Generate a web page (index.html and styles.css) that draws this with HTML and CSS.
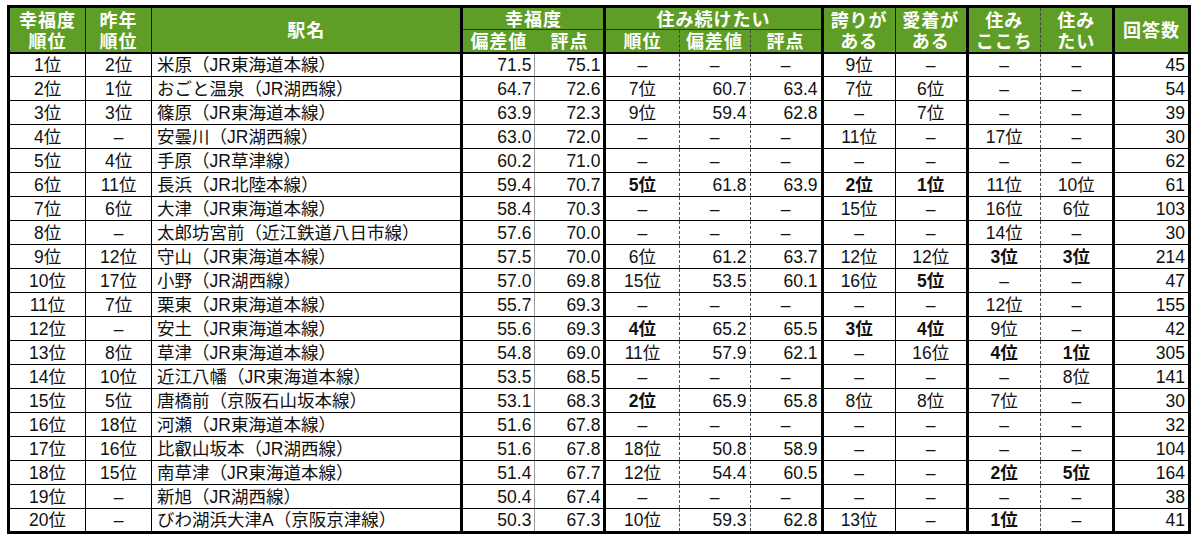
FILE: index.html
```html
<!DOCTYPE html>
<html lang="ja">
<head>
<meta charset="utf-8">
<title>幸福度ランキング</title>
<link rel="stylesheet" href="styles.css">
</head>
<body>
<div class="wrap">
<table class="rank">
<colgroup>
<col class="w1"><col class="w2"><col class="w3"><col class="w4"><col class="w5"><col class="w6"><col class="w7"><col class="w8"><col class="w9"><col class="w10"><col class="w11"><col class="w12"><col class="w13">
</colgroup>
<thead>
<tr class="h1">
<th rowspan="2" class="b-thin">幸福度<br>順位</th>
<th rowspan="2" class="b-thin">昨年<br>順位</th>
<th rowspan="2" class="b-thick">駅名</th>
<th colspan="2" class="b-thick hb">幸福度</th>
<th colspan="3" class="b-thick hb">住み続けたい</th>
<th rowspan="2" class="b-thin">誇りが<br>ある</th>
<th rowspan="2" class="b-thick">愛着が<br>ある</th>
<th rowspan="2" class="b-dash">住み<br>ここち</th>
<th rowspan="2" class="b-thick">住み<br>たい</th>
<th rowspan="2" class="b-thick">回答数</th>
</tr>
<tr class="h2">
<th class="b-none">偏差値</th>
<th class="b-thick">評点</th>
<th class="b-dash">順位</th>
<th class="b-dash">偏差値</th>
<th class="b-thick">評点</th>
</tr>
</thead>
<tbody>
<tr><td>1位</td><td>2位</td><td>米原（JR東海道本線）</td><td>71.5</td><td>75.1</td><td>–</td><td class="na">–</td><td class="na">–</td><td>9位</td><td>–</td><td>–</td><td>–</td><td>45</td></tr>
<tr><td>2位</td><td>1位</td><td>おごと温泉（JR湖西線）</td><td>64.7</td><td>72.6</td><td>7位</td><td>60.7</td><td>63.4</td><td>7位</td><td>6位</td><td>–</td><td>–</td><td>54</td></tr>
<tr><td>3位</td><td>3位</td><td>篠原（JR東海道本線）</td><td>63.9</td><td>72.3</td><td>9位</td><td>59.4</td><td>62.8</td><td>–</td><td>7位</td><td>–</td><td>–</td><td>39</td></tr>
<tr><td>4位</td><td>–</td><td>安曇川（JR湖西線）</td><td>63.0</td><td>72.0</td><td>–</td><td class="na">–</td><td class="na">–</td><td>11位</td><td>–</td><td>17位</td><td>–</td><td>30</td></tr>
<tr><td>5位</td><td>4位</td><td>手原（JR草津線）</td><td>60.2</td><td>71.0</td><td>–</td><td class="na">–</td><td class="na">–</td><td>–</td><td>–</td><td>–</td><td>–</td><td>62</td></tr>
<tr><td>6位</td><td>11位</td><td>長浜（JR北陸本線）</td><td>59.4</td><td>70.7</td><td class="bold">5位</td><td>61.8</td><td>63.9</td><td class="bold">2位</td><td class="bold">1位</td><td>11位</td><td>10位</td><td>61</td></tr>
<tr><td>7位</td><td>6位</td><td>大津（JR東海道本線）</td><td>58.4</td><td>70.3</td><td>–</td><td class="na">–</td><td class="na">–</td><td>15位</td><td>–</td><td>16位</td><td>6位</td><td>103</td></tr>
<tr><td>8位</td><td>–</td><td>太郎坊宮前（近江鉄道八日市線）</td><td>57.6</td><td>70.0</td><td>–</td><td class="na">–</td><td class="na">–</td><td>–</td><td>–</td><td>14位</td><td>–</td><td>30</td></tr>
<tr><td>9位</td><td>12位</td><td>守山（JR東海道本線）</td><td>57.5</td><td>70.0</td><td>6位</td><td>61.2</td><td>63.7</td><td>12位</td><td>12位</td><td class="bold">3位</td><td class="bold">3位</td><td>214</td></tr>
<tr><td>10位</td><td>17位</td><td>小野（JR湖西線）</td><td>57.0</td><td>69.8</td><td>15位</td><td>53.5</td><td>60.1</td><td>16位</td><td class="bold">5位</td><td>–</td><td>–</td><td>47</td></tr>
<tr><td>11位</td><td>7位</td><td>栗東（JR東海道本線）</td><td>55.7</td><td>69.3</td><td>–</td><td class="na">–</td><td class="na">–</td><td>–</td><td>–</td><td>12位</td><td>–</td><td>155</td></tr>
<tr><td>12位</td><td>–</td><td>安土（JR東海道本線）</td><td>55.6</td><td>69.3</td><td class="bold">4位</td><td>65.2</td><td>65.5</td><td class="bold">3位</td><td class="bold">4位</td><td>9位</td><td>–</td><td>42</td></tr>
<tr><td>13位</td><td>8位</td><td>草津（JR東海道本線）</td><td>54.8</td><td>69.0</td><td>11位</td><td>57.9</td><td>62.1</td><td>–</td><td>16位</td><td class="bold">4位</td><td class="bold">1位</td><td>305</td></tr>
<tr><td>14位</td><td>10位</td><td>近江八幡（JR東海道本線）</td><td>53.5</td><td>68.5</td><td>–</td><td class="na">–</td><td class="na">–</td><td>–</td><td>–</td><td>–</td><td>8位</td><td>141</td></tr>
<tr><td>15位</td><td>5位</td><td>唐橋前（京阪石山坂本線）</td><td>53.1</td><td>68.3</td><td class="bold">2位</td><td>65.9</td><td>65.8</td><td>8位</td><td>8位</td><td>7位</td><td>–</td><td>30</td></tr>
<tr><td>16位</td><td>18位</td><td>河瀬（JR東海道本線）</td><td>51.6</td><td>67.8</td><td>–</td><td class="na">–</td><td class="na">–</td><td>–</td><td>–</td><td>–</td><td>–</td><td>32</td></tr>
<tr><td>17位</td><td>16位</td><td>比叡山坂本（JR湖西線）</td><td>51.6</td><td>67.8</td><td>18位</td><td>50.8</td><td>58.9</td><td>–</td><td>–</td><td>–</td><td>–</td><td>104</td></tr>
<tr><td>18位</td><td>15位</td><td>南草津（JR東海道本線）</td><td>51.4</td><td>67.7</td><td>12位</td><td>54.4</td><td>60.5</td><td>–</td><td>–</td><td class="bold">2位</td><td class="bold">5位</td><td>164</td></tr>
<tr><td>19位</td><td>–</td><td>新旭（JR湖西線）</td><td>50.4</td><td>67.4</td><td>–</td><td class="na">–</td><td class="na">–</td><td>–</td><td>–</td><td>–</td><td>–</td><td>38</td></tr>
<tr><td>20位</td><td>–</td><td>びわ湖浜大津A（京阪京津線）</td><td>50.3</td><td>67.3</td><td>10位</td><td>59.3</td><td>62.8</td><td>13位</td><td>–</td><td class="bold">1位</td><td>–</td><td>41</td></tr>
</tbody>
</table>
</div>
</body>
</html>
```
FILE: styles.css
```css
html, body {
  margin: 0;
  padding: 0;
  background: #ffffff;
}
.wrap {
  padding: 5px 0 0 7px;
}
.rank {
  border-collapse: collapse;
  table-layout: fixed;
  width: 1184px;
  border: 3px solid #000;
  font-family: "Liberation Sans", "Noto Sans CJK JP", sans-serif;
  color: #111;
}
.w1 { width: 77px; }
.w2 { width: 66px; }
.w3 { width: 310px; }
.w4 { width: 73px; }
.w5 { width: 70px; }
.w6 { width: 74px; }
.w7 { width: 71px; }
.w8 { width: 72px; }
.w9 { width: 73px; }
.w10 { width: 72px; }
.w11 { width: 73px; }
.w12 { width: 73px; }
.w13 { width: 76px; }

thead th {
  background: #5f9e26;
  color: #fff;
  font-family: "Noto Sans CJK JP", sans-serif;
  font-weight: 700;
  font-size: 18px;
  line-height: 21px;
  letter-spacing: 1px;
  padding: 0;
  text-align: center;
  vertical-align: middle;
}
.h1 { height: 22px; }
.h2 { height: 23px; }
.hb { border-bottom: 1px solid #2a3a1a; }
.b-thin { border-right: 1px solid #1a1a1a; }
.b-thick { border-right: 3px solid #000; }
.b-dash { border-right: 1px dashed #444; }
.b-none { border-right: 1px solid #5f9e26; }
thead tr.h2 th { border-bottom: 2px solid #000; }
thead tr.h1 th[rowspan] { border-bottom: 2px solid #000; }

tbody tr { height: 24px; }
tbody td {
  font-size: 17.5px;
  line-height: 20px;
  padding: 0 3px 0 3px;
  border-bottom: 1px solid #000;
  text-align: center;
  white-space: nowrap;
  overflow: hidden;
  vertical-align: middle;
}
tbody td:nth-child(1) { border-right: 1px solid #000; }
tbody td:nth-child(2) { border-right: 1px solid #000; }
tbody td:nth-child(3) { border-right: 3px solid #000; text-align: left; padding-left: 5px; }
tbody td:nth-child(4) { border-right: 1px solid #9a9a9a; text-align: right; }
tbody td:nth-child(5) { border-right: 3px solid #000; text-align: right; }
tbody td:nth-child(6) { border-right: 1px dashed #555; }
tbody td:nth-child(7) { border-right: 1px dashed #555; text-align: right; }
tbody td:nth-child(8) { border-right: 3px solid #000; text-align: right; }
tbody td:nth-child(9) { border-right: 1px solid #000; }
tbody td:nth-child(10) { border-right: 3px solid #000; }
tbody td:nth-child(11) { border-right: 1px dashed #555; }
tbody td:nth-child(12) { border-right: 3px solid #000; }
tbody td:nth-child(13) { border-right: 3px solid #000; text-align: right; }
tbody td.na { text-align: center; }
tbody td.bold { font-weight: 700; }
```
